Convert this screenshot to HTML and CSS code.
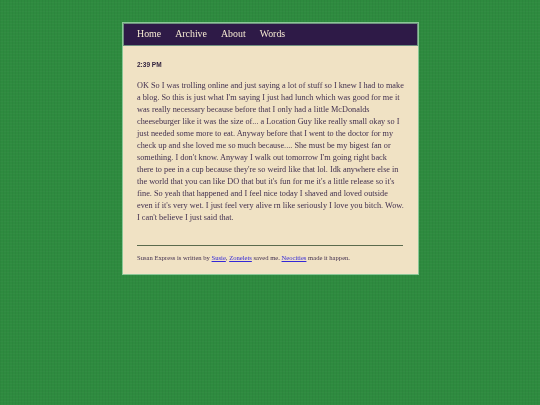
FILE: index.html
```html
<!DOCTYPE html>
<html lang="en">
<head>
<meta charset="utf-8">
<title>Susan Express</title>
<link rel="stylesheet" href="styles.css">
</head>
<body>
<div class="card">
  <nav class="nav">
    <a href="#">Home</a>
    <a href="#">Archive</a>
    <a href="#">About</a>
    <a href="#">Words</a>
  </nav>
  <main class="content">
    <h2 class="date">2:39 PM</h2>
    <p class="post">OK So I was trolling online and just saying a lot of stuff so I knew I had to make<br>a blog. So this is just what I'm saying I just had lunch which was good for me it<br>was really necessary because before that I only had a little McDonalds<br>cheeseburger like it was the size of... a Location Guy like really small okay so I<br>just needed some more to eat. Anyway before that I went to the doctor for my<br>check up and she loved me so much because.... She must be my bigest fan or<br>something. I don't know. Anyway I walk out tomorrow I'm going right back<br>there to pee in a cup because they're so weird like that lol. Idk anywhere else in<br>the world that you can like DO that but it's fun for me it's a little release so it's<br>fine. So yeah that happened and I feel nice today I shaved and loved outside<br>even if it's very wet. I just feel very alive rn like seriously I love you bitch. Wow.<br>I can't believe I just said that.</p>
    <footer class="foot">Susan Express is written by <a href="#">Susie</a>, <a href="#">Zonelets</a> saved me. <a href="#">Neocities</a> made it happen.</footer>
  </main>
</div>
</body>
</html>
```
FILE: styles.css
```css
html, body { margin: 0; padding: 0; }
body {
  height: 405px;
  overflow: hidden;
  background-color: #2e8b3f;
  background-image: repeating-linear-gradient(90deg, rgba(0,0,0,.04) 0 1px, transparent 1px 3px), repeating-linear-gradient(0deg, rgba(255,255,255,.02) 0 1px, transparent 1px 3px);
  font-family: "Liberation Serif", serif;
  color: #42304f;
}
.card {
  box-sizing: border-box;
  width: 297px;
  margin: 22px 0 0 122px;
  border: 1px solid #8ac796;
  background: #f0e2c4;
  filter: blur(.3px);
}
.nav {
  display: flex;
  gap: 14px;
  height: 23px;
  box-sizing: border-box;
  padding: 0 13px 2px;
  align-items: center;
  background: #2e1a47;
  border: 1px solid #6f8f80;
  font-size: 9.9px;
}
.nav a { color: #f5e9d2; text-decoration: none; }
.content { padding: 15px 15px 12px 14px; }
.date {
  margin: 0;
  font: bold 6.5px/8px "Liberation Sans", sans-serif;
  color: #33243f;
}
.post {
  margin: 11px 0 0;
  font-size: 8.25px;
  line-height: 12px;
  white-space: nowrap;
}
.foot {
  margin-top: 21px;
  padding-top: 7px;
  border-top: 1px solid #5b6b4d;
  font-size: 6.6px;
  line-height: 9px;
}
.foot a { color: #3328d8; }
```
